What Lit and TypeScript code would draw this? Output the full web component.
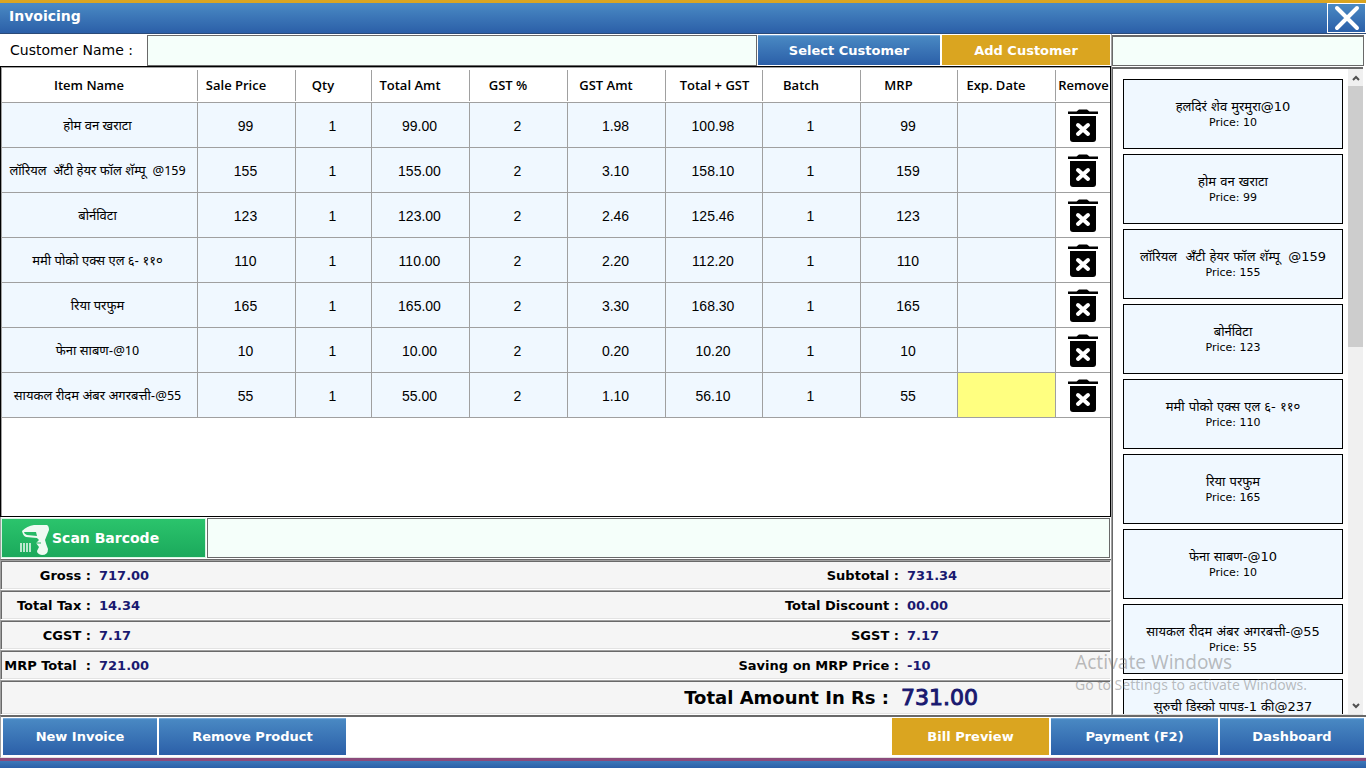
import { LitElement, html, css } from "lit";
import { customElement, state } from "lit/decorators.js";

interface Line {
  name: string;
  price: number;
  qty: number;
  gstPercent: number;
  mrp: number;
}

interface Product {
  name: string;
  price: number;
}

const LINES: Line[] = [
  { name: "होम वन खराटा", price: 99, qty: 1, gstPercent: 2, mrp: 99 },
  { name: "लॉरियल  अँटी हेयर फॉल शॅम्पू  @159", price: 155, qty: 1, gstPercent: 2, mrp: 159 },
  { name: "बोर्नविटा", price: 123, qty: 1, gstPercent: 2, mrp: 123 },
  { name: "ममी पोको एक्स एल ६- ११०", price: 110, qty: 1, gstPercent: 2, mrp: 110 },
  { name: "रिया परफुम", price: 165, qty: 1, gstPercent: 2, mrp: 165 },
  { name: "फेना साबण-@10", price: 10, qty: 1, gstPercent: 2, mrp: 10 },
  { name: "सायकल रीदम अंबर अगरबत्ती-@55", price: 55, qty: 1, gstPercent: 2, mrp: 55 },
];

const PRODUCTS: Product[] = [
  { name: "हलदिरं शेव मुरमुरा@10", price: 10 },
  ...LINES.map(({ name, price }) => ({ name, price })),
  { name: "सुरुची डिस्को पापड-1 की@237", price: 237 },
];

const COLUMNS = ["Item Name", "Sale Price", "Qty", "Total Amt", "GST %", "GST Amt", "Total + GST", "Batch", "MRP", "Exp. Date", "Remove"];

// Headings too wide to leave room for the sort glyph beside them.
const WIDE_COLUMNS = ["Total + GST", "Remove"];

const TOTALS = [
  ["Gross :", "717.00", "Subtotal :", "731.34"],
  ["Total Tax :", "14.34", "Total Discount :", "00.00"],
  ["CGST :", "7.17", "SGST :", "7.17"],
  ["MRP Total  :", "721.00", "Saving on MRP Price :", "-10"],
];

@customElement("app-root")
export class AppRoot extends LitElement {
  @state() private lines = LINES;

  static styles = css`
    :host {
      display: block;
      font-family: "DejaVu Sans", "Noto Sans Devanagari", sans-serif;
      color: #000;
      --blue: linear-gradient(#4a8ac4, #2b5fa8);
      --gold: #daa520;
      --mint: #f5fffa;
      --alice: #f0f8ff;
      --line: #a0a0a0;
      --dark: #696969;
    }
    * {
      box-sizing: border-box;
    }
    button,
    input {
      font: inherit;
      margin: 0;
      border: 0;
      border-radius: 0;
      padding: 0;
      min-width: 0;
    }
    .window {
      display: flex;
      flex-direction: column;
      height: 100vh;
      background: #fff;
      overflow: hidden;
    }
    .titlebar {
      display: flex;
      justify-content: space-between;
      height: 34px;
      flex: none;
      border-top: 3px solid var(--gold);
      border-bottom: 1px solid #2b4a78;
      background: var(--blue);
    }
    .title {
      margin: 0;
      padding: 4px 9px;
      font-size: 14px;
      line-height: 18px;
      font-weight: 700;
      color: #fff;
    }
    .close {
      display: grid;
      place-items: center;
      width: 39px;
      border: 1px solid #fff;
      background: var(--blue);
    }
    .main {
      display: grid;
      grid-template-columns: minmax(0, 1fr) 254px;
      flex: 1;
      min-height: 0;
    }
    .left,
    .right {
      display: flex;
      flex-direction: column;
      min-height: 0;
      min-width: 0;
    }
    .left {
      border-right: 1px solid var(--line);
    }
    .customer {
      display: flex;
      height: 32px;
      flex: none;
      padding: 0 1px 0 0;
      border-top: 1px solid #fff;
    }
    .customer label {
      width: 147px;
      padding-left: 10px;
      font-size: 14px;
      line-height: 30px;
    }
    .customer input {
      flex: 1;
      border: 1px solid var(--dark);
      background: var(--mint);
    }
    .action {
      color: #fff;
      font-size: 13px;
      font-weight: 700;
      background: var(--blue);
      box-shadow: inset 0 2px 1px -1px #7fb0e0;
    }
    .gold {
      background: var(--gold);
      box-shadow: none;
    }
    .customer .action {
      margin-bottom: 1px;
    }
    .select {
      width: 182px;
      margin-left: 1px;
    }
    .add {
      width: 168px;
      margin-left: 2px;
    }
    .grid {
      flex: 1;
      min-height: 0;
      overflow: hidden;
      border: 1px solid #000;
      box-shadow: inset 1px 0 0 var(--line);
    }
    table {
      width: 100%;
      table-layout: fixed;
      border-spacing: 0;
      border-left: 1px solid var(--line);
      border-top: 1px solid var(--line);
    }
    th,
    td {
      padding: 0;
      text-align: center;
      border-bottom: 1px solid var(--line);
    }
    th {
      height: 35px;
      padding-right: 22px;
      font: 600 13px/18px "Open Sans", sans-serif;
      white-space: nowrap;
      background: linear-gradient(var(--line), var(--line)) right bottom 1px / 1px calc(100% - 3px) no-repeat;
    }
    .wide {
      padding-right: 0;
    }
    td {
      height: 45px;
      padding: 2px 2px 0 0;
      border-right: 1px solid var(--line);
      background: var(--alice);
      font: 14px/20px "Liberation Sans", sans-serif;
    }
    .name {
      padding: 3px 4px 0 0;
      font: 13px/20px "Noto Sans Devanagari", "Noto Sans", sans-serif;
      white-space: pre;
    }
    .current {
      background: #ffff80;
    }
    .remove {
      padding: 2px 0 0;
      background: #fff;
    }
    .trash {
      display: block;
      width: 32px;
      margin: 0 auto;
      background: none;
    }
    svg {
      display: block;
    }
    .c-name {
      width: 196px;
    }
    .c-std {
      width: 98px;
    }
    .c-tight {
      width: 97px;
    }
    .c-qty {
      width: 76px;
    }
    .c-remove {
      width: 55px;
    }
    .scan {
      display: flex;
      gap: 1px;
      height: 43px;
      flex: none;
      padding: 1px 1px 1px 0;
      border-bottom: 1px solid var(--dark);
      border-left: 1px solid var(--line);
    }
    .scan-button {
      display: flex;
      align-items: center;
      width: 205px;
      padding-left: 18px;
      color: #fff;
      font-size: 14px;
      font-weight: 700;
      background: linear-gradient(#2bc46c, #1ba95c);
      border: 1px solid #d9f5e5;
    }
    .scan input {
      flex: 1;
      border: 1px solid var(--dark);
      background: var(--mint);
    }
    .row {
      display: flex;
      align-items: center;
      height: 30px;
      flex: none;
      border: 1px solid;
      border-color: var(--line) #fff #fff var(--line);
      box-shadow: inset 1px 1px 0 var(--dark), inset 0 -1px 0 #e3e3e3;
      background: #f5f5f5;
      font-size: 13px;
      font-weight: 700;
      white-space: pre;
    }
    .row output {
      color: #191970;
    }
    .label {
      width: 90px;
      text-align: right;
    }
    .first {
      flex: 1;
      padding-left: 8px;
    }
    .second {
      width: 211px;
      padding-left: 8px;
    }
    .grand {
      height: 35px;
      font-size: 18px;
      justify-content: flex-end;
    }
    .grand output {
      width: 221px;
      padding-left: 12px;
      font-size: 22px;
      font-weight: 400;
      -webkit-text-stroke: 1px #191970;
    }
    .search {
      height: 31px;
      flex: none;
      margin: 1px 2px 1px 0;
      border: 1px solid var(--dark);
      border-top-width: 2px;
      background: var(--mint);
    }
    .panel {
      display: flex;
      flex: 1;
      min-height: 0;
      border-top: 2px solid var(--dark);
      border-left: 1px solid var(--dark);
      border-bottom: 1px solid #e3e3e3;
      margin-right: 3px;
    }
    .products {
      flex: 1;
      display: flex;
      flex-direction: column;
      gap: 5px;
      overflow: hidden;
      padding: 10px 5px 0 10px;
    }
    .product {
      flex: none;
      height: 70px;
      padding-top: 2px;
      border: 1px solid #000;
      background: var(--alice);
      font: 11px/16px "DejaVu Sans", "Noto Sans Devanagari", sans-serif;
      white-space: pre;
      color: #000;
    }
    .product span {
      display: block;
    }
    .product .product-name {
      font-size: 13px;
    }
    .scrollbar {
      display: flex;
      flex-direction: column;
      width: 15px;
      background: #f0f0f0;
    }
    .arrow {
      display: grid;
      place-items: center;
      height: 17px;
      width: 15px;
    }
    .thumb {
      height: 261px;
      background: #cdcdcd;
    }
    .arrow:last-child {
      margin-top: auto;
    }
    .footer {
      display: flex;
      gap: 2px;
      height: 43px;
      flex: none;
      padding: 1px 2px 2px 2px;
      border-top: 2px solid var(--dark);
      border-left: 1px solid var(--line);
      border-bottom: 1px solid #e3e3e3;
    }
    .new {
      width: 154px;
    }
    .remove-product {
      width: 187px;
    }
    .preview {
      width: 157px;
      margin-left: auto;
    }
    .payment {
      width: 167px;
    }
    .dashboard {
      width: 144px;
    }
    .base {
      height: 10px;
      flex: none;
      border-top: 3px solid #8b4a7b;
      background: linear-gradient(#3c78b8, #2b5fa8);
    }
    .watermark {
      position: absolute;
      right: 59px;
      bottom: 72px;
      font-family: "Noto Sans", sans-serif;
      color: rgba(110, 110, 110, 0.45);
      pointer-events: none;
    }
    .watermark p {
      margin: 0;
      font-size: 14px;
      line-height: 22px;
      white-space: nowrap;
    }
    .watermark .large {
      font-size: 19px;
      line-height: 24px;
    }
  `;

  private remove(line: Line) {
    this.lines = this.lines.filter((l) => l !== line);
  }

  private renderLine(line: Line, last: boolean) {
    const total = line.price * line.qty;
    const gst = (total * line.gstPercent) / 100;
    return html`<tr>
      <td class="name">${line.name}</td>
      <td>${line.price}</td>
      <td>${line.qty}</td>
      <td>${total.toFixed(2)}</td>
      <td>${line.gstPercent}</td>
      <td>${gst.toFixed(2)}</td>
      <td>${(total + gst).toFixed(2)}</td>
      <td>1</td>
      <td>${line.mrp}</td>
      <td class=${last ? "current" : ""}></td>
      <td class="remove">
        <button class="trash" aria-label="Remove" @click=${() => this.remove(line)}>
          <svg width="32" height="34" viewBox="0 0 32 34">
            <path d="M1 2.500h8.500l2.500-2h8l2.500 2H31V5H1z" />
            <path d="M3 7h26v23q0 3-3 3H6q-3 0-3-3z" />
            <path d="M11 16l10 9M21 16l-10 9" stroke="#fff" stroke-width="4" stroke-linecap="round" />
          </svg>
        </button>
      </td>
    </tr>`;
  }

  render() {
    return html`<div class="window">
      <header class="titlebar">
        <h1 class="title">Invoicing</h1>
        <button class="close" aria-label="Close">
          <svg width="26" height="26" viewBox="0 0 26 26">
            <path d="M3 3l20 20M23 3L3 23" stroke="#fff" stroke-width="4" stroke-linecap="round" />
          </svg>
        </button>
      </header>
      <main class="main">
        <section class="left">
          <div class="customer">
            <label for="customer">Customer Name :</label>
            <input id="customer" type="text" />
            <button class="action select">Select Customer</button>
            <button class="action gold add">Add Customer</button>
          </div>
          <div class="grid">
            <table>
              <colgroup>
                <col class="c-name" />
                <col class="c-std" />
                <col class="c-qty" />
                <col class="c-std" span="3" />
                <col class="c-tight" />
                <col class="c-std" />
                <col class="c-tight" />
                <col class="c-std" />
                <col class="c-remove" />
              </colgroup>
              <thead>
                <tr>${COLUMNS.map((c) => html`<th scope="col" class=${WIDE_COLUMNS.includes(c) ? "wide" : ""}>${c}</th>`)}</tr>
              </thead>
              <tbody>
                ${this.lines.map((l, i) => this.renderLine(l, i === this.lines.length - 1))}
              </tbody>
            </table>
          </div>
          <div class="scan">
            <button class="scan-button">
              <svg width="32" height="34" viewBox="0 0 32 34">
                <path fill="#eefaf3" fill-rule="evenodd" d="M2 10Q7 5 14 4h13q2 1 2 5l-4 10q1 4 3 9 0 6-6 6-5-1-5-4l2-4-3-4 3-3-2-2L6 16Q3 15 2 10zM4 11q0 2 3 3l10 1-1-4z" />
                <path d="M1 22v9M4 22v9M7 22v9M10 22v9" stroke="#eefaf3" stroke-width="1.500" />
                <path d="M16 22h5" stroke="#22b563" stroke-width="1" />
              </svg>
              <span>Scan Barcode</span>
            </button>
            <input type="text" aria-label="Barcode" />
          </div>
          ${TOTALS.map(
            ([a, av, b, bv]) => html`<div class="row">
              <span class="label">${a}</span><output class="first">${av}</output><span>${b}</span><output class="second">${bv}</output>
            </div>`
          )}
          <div class="row grand"><span>Total Amount In Rs :</span><output>731.00</output></div>
        </section>
        <aside class="right">
          <input class="search" type="text" aria-label="Search products" />
          <div class="panel">
            <div class="products">
              ${PRODUCTS.map(
                (p) => html`<button class="product"><span class="product-name">${p.name}</span><span>Price: ${p.price}</span></button>`
              )}
            </div>
            <div class="scrollbar">
              <div class="arrow">
                <svg width="8" height="6" viewBox="0 0 8 6"><path d="M1 5l3-3 3 3" fill="none" stroke="#505050" stroke-width="2" /></svg>
              </div>
              <div class="thumb"></div>
              <div class="arrow">
                <svg width="8" height="6" viewBox="0 0 8 6"><path d="M1 1l3 3 3-3" fill="none" stroke="#505050" stroke-width="2" /></svg>
              </div>
            </div>
          </div>
        </aside>
      </main>
      <footer class="footer">
        <button class="action new">New Invoice</button>
        <button class="action remove-product">Remove Product</button>
        <button class="action gold preview">Bill Preview</button>
        <button class="action payment">Payment (F2)</button>
        <button class="action dashboard">Dashboard</button>
      </footer>
      <div class="base"></div>
      <div class="watermark">
        <p class="large">Activate Windows</p>
        <p>Go to Settings to activate Windows.</p>
      </div>
    </div>`;
  }
}
